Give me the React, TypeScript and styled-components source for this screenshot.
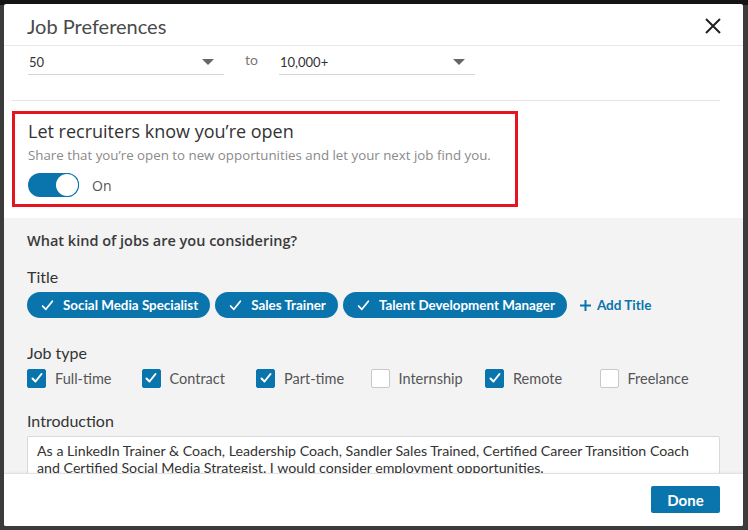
import styled, { createGlobalStyle } from 'styled-components';

const Global = createGlobalStyle`
  html, body {
    margin: 0;
    padding: 0;
    background: #2a2a2a;
  }
  * { box-sizing: border-box; }
`;

const BLUE = '#0a74ad';

const Backdrop = styled.div`
  width: 748px;
  height: 530px;
  padding: 4px 5px 4px 4px;
  background: linear-gradient(#141414 0 5px, #3b3b3b 5px);
`;
const Modal = styled.div`
  height: 522px;
  background: #fff;
  border-radius: 2px;
  display: flex;
  flex-direction: column;
  overflow: hidden;
  font-family: "Open Sans", sans-serif;
  color: #333;
`;
const Header = styled.div`
  height: 42px;
  flex-shrink: 0;
  display: flex;
  align-items: center;
  justify-content: space-between;
  padding: 2px 22px 0 23px;
  border-bottom: 1px solid #e8e8e8;
`;
const HeaderTitle = styled.h1`
  margin: 0;
  font-family: Lato, sans-serif;
  font-size: 20px;
  font-weight: 400;
  color: #4a4a4a;
`;
const Close = styled.button`
  border: 0;
  background: none;
  padding: 0;
  display: flex;
  cursor: pointer;
`;
const Body = styled.div`
  flex: 1;
  overflow: hidden;
`;
const Top = styled.div`
  padding: 0 23px 0 8px;
`;
const RangeRow = styled.div`
  display: flex;
  align-items: flex-start;
  padding: 4px 0 0 16px;
  height: 55px;
  border-bottom: 1px solid #e4e4e4;
`;
const Select = styled.div`
  width: 196px;
  height: 25px;
  display: flex;
  align-items: center;
  justify-content: space-between;
  padding: 0 10px 0 1px;
  border-bottom: 1px solid #d6d6d6;
  font-family: Lato, sans-serif;
  font-size: 13px;
  color: #333;
`;
const Caret = styled.span`
  width: 0;
  height: 0;
  border-left: 6px solid transparent;
  border-right: 6px solid transparent;
  border-top: 6px solid #666;
`;
const To = styled.span`
  width: 55px;
  text-align: center;
  font-family: Lato, sans-serif;
  font-size: 14px;
  color: #777;
  line-height: 20px;
`;
const Highlight = styled.section`
  margin: 10px 0 11px 0;
  width: 506px;
  border: 3px solid #e5141f;
  padding: 6px 12px 7px 13px;
`;
const HighlightTitle = styled.h2`
  margin: 0;
  font-size: 18px;
  font-weight: 400;
  color: #333;
  line-height: 22px;
`;
const HighlightText = styled.p`
  margin: 5px 0 10px;
  font-size: 13.3px;
  color: #8a8a8a;
  line-height: 16px;
  white-space: nowrap;
`;
const ToggleRow = styled.div`
  display: flex;
  align-items: center;
  gap: 13px;
  font-size: 14px;
  color: #555;
`;
const Toggle = styled.span<{ on: boolean }>`
  position: relative;
  width: 51px;
  height: 24px;
  border-radius: 12px;
  background: ${(p) => (p.on ? BLUE : '#999')};
  &::after {
    content: '';
    position: absolute;
    top: 1px;
    left: ${(p) => (p.on ? '28px' : '1px')};
    width: 22px;
    height: 22px;
    border-radius: 50%;
    background: #fff;
    box-shadow: 0 0 0 1px ${BLUE};
  }
`;
const Gray = styled.div`
  background: #f3f3f4;
  padding: 13px 23px 0 23px;
  height: 100%;
`;
const Question = styled.h3`
  margin: 0 0 17px;
  font-size: 14.5px;
  font-weight: 600;
  color: #3a3a3a;
  line-height: 20px;
`;
const Label = styled.div`
  font-family: Lato, sans-serif;
  font-size: 16px;
  color: #333;
  line-height: 18px;
  margin-bottom: 6px;
`;
const Pills = styled.div`
  display: flex;
  align-items: center;
  gap: 5px;
  margin-bottom: 26px;
`;
const Pill = styled.span`
  display: inline-flex;
  align-items: center;
  gap: 9px;
  height: 26px;
  padding: 0 12px 0 14px;
  border-radius: 13px;
  background: ${BLUE};
  color: #fff;
  font-family: Lato, sans-serif;
  font-size: 13.4px;
  font-weight: 700;
`;
const AddTitle = styled.span`
  margin-left: 8px;
  display: inline-flex;
  align-items: center;
  gap: 6px;
  color: ${BLUE};
  font-family: Lato, sans-serif;
  font-size: 13.5px;
  font-weight: 700;
`;
const Types = styled.div`
  display: grid;
  grid-template-columns: repeat(6, 114.5px);
  margin-bottom: 24px;
`;
const TypeItem = styled.label`
  display: flex;
  align-items: center;
  gap: 9px;
  font-family: Lato, sans-serif;
  font-size: 14.5px;
  color: #555;
  height: 20px;
`;
const Box = styled.span<{ checked: boolean }>`
  width: 19px;
  height: 19px;
  border-radius: 2px;
  display: flex;
  align-items: center;
  justify-content: center;
  background: ${(p) => (p.checked ? BLUE : '#fff')};
  border: 1px solid ${(p) => (p.checked ? BLUE : '#c8c8c8')};
`;
const Intro = styled.div`
  margin-top: 6px;
  background: #fff;
  border: 1px solid #d9d9d9;
  border-radius: 2px;
  padding: 5px 9px;
  font-family: Lato, sans-serif;
  font-size: 14.2px;
  line-height: 17px;
  color: #333;
  height: 60px;
`;
const Footer = styled.div`
  height: 53px;
  flex-shrink: 0;
  border-top: 1px solid #e2e2e2;
  display: flex;
  align-items: center;
  justify-content: flex-end;
  padding: 0 23px 1px 0;
  background: #fff;
  box-shadow: 0 -1px 2px rgba(0, 0, 0, 0.04);
`;
const Done = styled.button`
  height: 27px;
  width: 69px;
  border: 0;
  border-radius: 2px;
  background: ${BLUE};
  color: #fff;
  font-family: Lato, sans-serif;
  font-size: 15px;
  font-weight: 700;
`;

const Check = ({ size = 12, width = 2 }: { size?: number; width?: number }) => (
  <svg width={size} height={size} viewBox="0 0 12 12" fill="none">
    <path d="M1.5 6.5 L4.5 9.5 L10.5 2" stroke="#fff" strokeWidth={width} strokeLinecap="round" strokeLinejoin="round" />
  </svg>
);

const titles = ['Social Media Specialist', 'Sales Trainer', 'Talent Development Manager'];
const types: [string, boolean][] = [
  ['Full-time', true],
  ['Contract', true],
  ['Part-time', true],
  ['Internship', false],
  ['Remote', true],
  ['Freelance', false],
];

export default function App() {
  return (
    <Backdrop>
      <Global />
      <Modal>
        <Header>
          <HeaderTitle>Job Preferences</HeaderTitle>
          <Close>
            <svg width="16" height="16" viewBox="0 0 16 16">
              <path d="M1 1 L15 15 M15 1 L1 15" stroke="#222" strokeWidth="2" />
            </svg>
          </Close>
        </Header>
        <Body>
          <Top>
            <RangeRow>
              <Select>
                50 <Caret />
              </Select>
              <To>to</To>
              <Select>
                10,000+ <Caret />
              </Select>
            </RangeRow>
            <Highlight>
              <HighlightTitle>Let recruiters know you’re open</HighlightTitle>
              <HighlightText>Share that you’re open to new opportunities and let your next job find you.</HighlightText>
              <ToggleRow>
                <Toggle on />
                On
              </ToggleRow>
            </Highlight>
          </Top>
          <Gray>
            <Question>What kind of jobs are you considering?</Question>
            <Label>Title</Label>
            <Pills>
              {titles.map((t) => (
                <Pill key={t}>
                  <Check size={13} width={1.6} />
                  {t}
                </Pill>
              ))}
              <AddTitle>
                <svg width="11" height="11" viewBox="0 0 11 11">
                  <path d="M5.5 0 V11 M0 5.5 H11" stroke={BLUE} strokeWidth="2" />
                </svg>
                Add Title
              </AddTitle>
            </Pills>
            <Label>Job type</Label>
            <Types>
              {types.map(([t, c]) => (
                <TypeItem key={t}>
                  <Box checked={c}>{c && <Check />}</Box>
                  {t}
                </TypeItem>
              ))}
            </Types>
            <Label>Introduction</Label>
            <Intro>
              As a LinkedIn Trainer &amp; Coach, Leadership Coach, Sandler Sales Trained, Certified Career Transition Coach
              and Certified Social Media Strategist. I would consider employment opportunities.
            </Intro>
          </Gray>
        </Body>
        <Footer>
          <Done>Done</Done>
        </Footer>
      </Modal>
    </Backdrop>
  );
}
